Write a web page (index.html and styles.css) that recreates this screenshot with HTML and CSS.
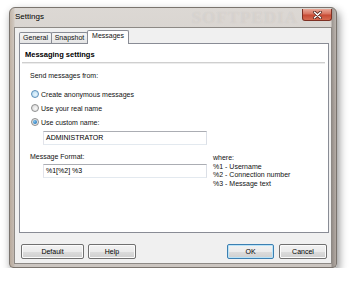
FILE: index.html
```html
<!DOCTYPE html>
<html lang="en">
<head>
    <meta charset="UTF-8">
    <title>Settings</title>
    <link rel="stylesheet" href="styles.css">
</head>
<body>
    <div class="dialog">
        <div class="titlebar">
            <span class="title">Settings</span>
            <span class="watermark">SOFTPEDIA</span>
            <span class="close-btn">
                <svg width="11" height="8" viewBox="0 0 11 8">
                    <path d="M2.5 1.2 L8.5 6.8 M8.5 1.2 L2.5 6.8" stroke="#5a2a22" stroke-width="3" stroke-linecap="round"/>
                    <path d="M2.5 1.2 L8.5 6.8 M8.5 1.2 L2.5 6.8" stroke="#ffffff" stroke-width="1.5" stroke-linecap="round"/>
                </svg>
            </span>
        </div>

        <div class="client">
            <div class="tabs">
                <div class="tab tab-general">General</div>
                <div class="tab tab-snapshot">Snapshot</div>
                <div class="tab tab-messages active">Messages</div>
            </div>

            <div class="panel">
                <div class="panel-title">Messaging settings</div>
                <div class="separator"></div>

                <div class="section">
                    <div class="label first-label">Send messages from:</div>
                    <div class="radio-row first-radio"><span class="radio hover"></span>Create anonymous messages</div>
                    <div class="radio-row"><span class="radio"></span>Use your real name</div>
                    <div class="radio-row"><span class="radio checked"></span>Use custom name:</div>
                    <div class="textbox name-box">ADMINISTRATOR</div>

                    <div class="format-row">
                        <div class="format-col">
                            <div class="label">Message Format:</div>
                            <div class="textbox format-box">%1[%2] %3</div>
                        </div>
                        <div class="legend">
                            <div>where:</div>
                            <div>%1 - Username</div>
                            <div>%2 - Connection number</div>
                            <div>%3 - Message text</div>
                        </div>
                    </div>
                </div>
            </div>

            <div class="footer">
                <button class="btn btn-default">Default</button>
                <button class="btn btn-help">Help</button>
                <span class="spacer"></span>
                <button class="btn btn-ok">OK</button>
                <button class="btn btn-cancel">Cancel</button>
            </div>
        </div>
    </div>
</body>
</html>
```
FILE: styles.css
```css
body {
    margin: 0;
    padding: 7px 0 0 9px;
    background-color: #ffffff;
    font-family: "Liberation Sans", Arial, sans-serif;
    font-size: 7px;
    color: #111;
}
.dialog {
    width: 328px;
    height: 261px;
    box-sizing: border-box;
    border: 1px solid #7a746e;
    border-radius: 6px 6px 4px 4px;
    background:
        linear-gradient(to right, rgba(150,120,90,0.35) 0, rgba(150,120,90,0.15) 4px, transparent 5px, transparent 321px, rgba(80,72,66,0.45) 322px, rgba(120,105,95,0.3) 326px),
        linear-gradient(to bottom, #dcd8d4, #d0cac5 40%, #cbc5c0);
    box-shadow: 2px 4px 9px rgba(0,0,0,0.45);
}
.titlebar {
    height: 19px;
    display: flex;
    padding-left: 5px;
}
.title {
    line-height: 18px;
    font-size: 8px;
    color: #000;
}
.watermark {
    margin-left: auto;
    margin-right: 4px;
    font-family: "Liberation Serif", serif;
    font-weight: bold;
    font-size: 17px;
    line-height: 19px;
    letter-spacing: 1px;
    color: rgba(255,255,255,0.2);
    text-shadow: 0 0 1px rgba(120,110,100,0.15);
}
.close-btn {
    width: 30px;
    height: 12px;
    box-sizing: border-box;
    margin-top: 1px;
    margin-right: 4px;
    border: 1px solid #7d3023;
    border-top: none;
    border-radius: 0 0 3px 3px;
    background: linear-gradient(to bottom, #e9a999 0%, #d8735f 45%, #c64a34 55%, #d66a50 100%);
    display: flex;
    align-items: center;
    justify-content: center;
}
.client {
    height: 237px;
    box-sizing: border-box;
    margin: 0 4px;
    padding: 2px 2px 0 4px;
    border: 1px solid #8d8985;
    background-color: #f0f0f0;
}
.tabs {
    display: flex;
    align-items: flex-end;
    height: 14px;
    margin-bottom: -1px;
    position: relative;
    z-index: 1;
}
.tab {
    height: 11px;
    box-sizing: border-box;
    margin-bottom: 1px;
    margin-right: -1px;
    border: 1px solid #898c95;
    border-bottom: none;
    border-radius: 2px 2px 0 0;
    background: linear-gradient(to bottom, #f5f5f5, #e4e4e4);
    line-height: 9px;
    text-align: center;
}
.tab-general {
    width: 33px;
}
.tab-snapshot {
    width: 37px;
}
.tab.active {
    width: 42px;
    height: 14px;
    margin-bottom: 0;
    background: #ffffff;
    line-height: 10px;
}
.panel {
    height: 190px;
    box-sizing: border-box;
    border: 1px solid #898c95;
    background-color: #ffffff;
}
.panel-title {
    padding: 6px 0 0 5px;
    font-weight: bold;
    font-size: 7.5px;
    line-height: 10px;
    color: #000;
}
.separator {
    height: 2px;
    box-sizing: border-box;
    margin: 2px 3px 0 2px;
    border-top: 1px solid #cfcfcf;
    border-bottom: 1px solid #ececec;
}
.section {
    padding-left: 10px;
}
.label {
    line-height: 10px;
}
.first-label {
    margin-top: 7px;
}
.radio-row {
    height: 14px;
    display: flex;
    align-items: center;
}
.first-radio {
    margin-top: 6px;
}
.radio {
    width: 8px;
    height: 8px;
    box-sizing: border-box;
    margin-left: 1px;
    margin-right: 2px;
    border: 1px solid #8e8f8f;
    border-radius: 50%;
    background: radial-gradient(circle at 60% 60%, #f8f8f8, #d4d4d4);
    display: flex;
    align-items: center;
    justify-content: center;
}
.radio.hover {
    border-color: #5d8fba;
    background: radial-gradient(circle at 60% 60%, #eaf6fd, #a9d6f1);
}
.radio.checked::after {
    content: "";
    width: 4px;
    height: 4px;
    border-radius: 50%;
    background: radial-gradient(circle at 35% 35%, #7ec4f0, #0f5fa8);
}
.textbox {
    width: 164px;
    height: 14px;
    box-sizing: border-box;
    margin-left: 13px;
    padding-left: 2px;
    border: 1px solid;
    border-color: #abadb3 #dbdfe6 #e3e9ef #e2e3ea;
    background: #ffffff;
    line-height: 12px;
    color: #000;
}
.name-box {
    margin-top: 2px;
}
.format-row {
    display: flex;
    margin-top: 7px;
}
.format-box {
    margin-top: 2px;
}
.legend {
    margin-left: 6px;
    margin-top: 2px;
    line-height: 8.7px;
}
.footer {
    display: flex;
    margin-top: 11px;
    padding: 0 2px;
}
.spacer {
    flex: 1;
}
.btn {
    height: 15px;
    box-sizing: border-box;
    padding: 0;
    border: 1px solid #707070;
    border-radius: 2px;
    background: linear-gradient(to bottom, #f2f2f2 0%, #ebebeb 50%, #dddddd 50%, #cfcfcf 100%);
    box-shadow: inset 0 0 0 1px #fbfbfb;
    font-family: "Liberation Sans", Arial, sans-serif;
    font-size: 7px;
    line-height: 13px;
    color: #000;
}
.btn-default {
    width: 63px;
}
.btn-help {
    width: 48px;
    margin-left: 4px;
}
.btn-ok {
    width: 47px;
    border-color: #3c7fb1;
    box-shadow: inset 0 0 0 1px #b9e3f8;
}
.btn-cancel {
    width: 48px;
    margin-left: 5px;
}
```
